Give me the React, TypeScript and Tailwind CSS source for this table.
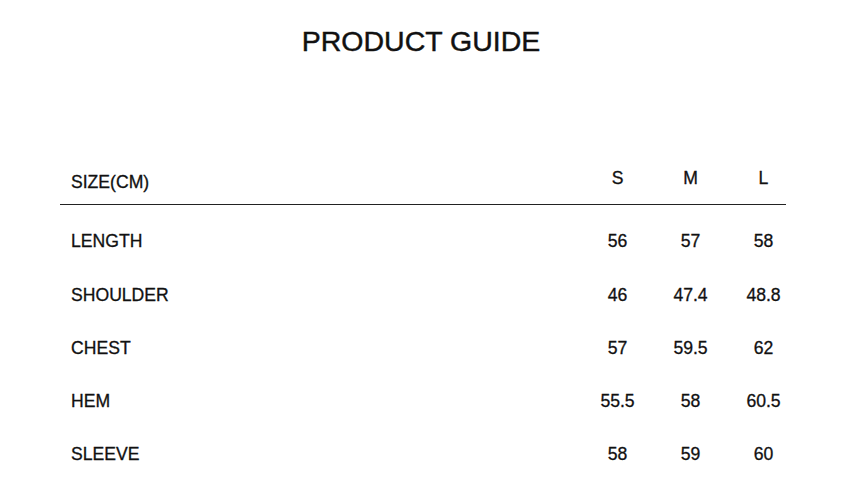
const sizes = ['S', 'M', 'L'];

const rows: { label: string; values: string[] }[] = [
  { label: 'LENGTH', values: ['56', '57', '58'] },
  { label: 'SHOULDER', values: ['46', '47.4', '48.8'] },
  { label: 'CHEST', values: ['57', '59.5', '62'] },
  { label: 'HEM', values: ['55.5', '58', '60.5'] },
  { label: 'SLEEVE', values: ['58', '59', '60'] },
];

export default function App() {
  return (
    <div className="w-[866px] h-[495px] bg-white text-[#111] font-['Liberation_Sans',Arial,sans-serif] overflow-hidden [-webkit-text-stroke:0.3px_#111]">
      <h1 className="pt-[24px] pr-[24px] text-center text-[28.5px] leading-[34px] [-webkit-text-stroke:0.45px_#111]">
        PRODUCT GUIDE
      </h1>

      <div className="ml-[60px] mt-[100px]">
        {/* header */}
        <div className="grid grid-cols-[1fr_73px_73px_73px] w-[740px] h-[46px] items-center text-[17.6px]">
          <span className="pl-[11px] pt-[2px]">SIZE(CM)</span>
          {sizes.map((s) => (
            <span key={s} className="text-center pb-[5px]">
              {s}
            </span>
          ))}
        </div>
        <div className="w-[726px] border-t border-[#222]" />

        {/* rows */}
        <div className="mt-[10px]">
          {rows.map((row) => (
            <div
              key={row.label}
              className="grid grid-cols-[1fr_73px_73px_73px] w-[740px] h-[53.25px] items-center text-[17.6px]"
            >
              <span className="pl-[11px]">{row.label}</span>
              {row.values.map((v, i) => (
                <span key={i} className="text-center">
                  {v}
                </span>
              ))}
            </div>
          ))}
        </div>
      </div>
    </div>
  );
}
